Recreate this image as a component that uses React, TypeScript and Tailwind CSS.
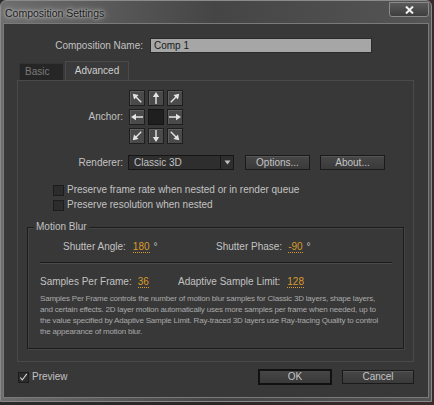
import React from "react";

function Arrow({ deg }: { deg: number }) {
  return (
    <svg width="14" height="14" viewBox="0 0 14 14">
      <g transform={`rotate(${deg} 7 7)`}>
        <path d="M7 1 L10.2 6 L7.7 6 L7.7 13 L6.3 13 L6.3 6 L3.8 6 Z" fill="#e4e4e4" />
      </g>
    </svg>
  );
}

const anchors = [-45, 0, 45, -90, null, 90, -135, 180, 135];

function AnchorButton({ deg }: { deg: number | null }) {
  if (deg === null) {
    return <div className="w-[16px] h-[16px] border border-[#151515] bg-[#1f1f1f]" />;
  }
  return (
    <div className="w-[16px] h-[16px] border border-[#1e1e1e] bg-[#4a4a4a] shadow-[inset_1px_1px_0_#5e5e5e] flex items-center justify-center">
      <Arrow deg={deg} />
    </div>
  );
}

function Check({ on = false }: { on?: boolean }) {
  return (
    <div className="w-[11px] h-[11px] border border-[#1c1c1c] bg-[#2c2c2c] flex items-center justify-center">
      {on && (
        <svg width="11" height="11" viewBox="0 0 11 11">
          <path d="M1.5 5.5 L4 8.5 L9.5 1" stroke="#d8d8d8" strokeWidth="1.3" fill="none" />
        </svg>
      )}
    </div>
  );
}

function Button({ label, w }: { label: string; w: string }) {
  return (
    <div
      className={`${w} h-[15px] border border-[#1a1a1a] bg-gradient-to-b from-[#474747] to-[#3a3a3a] shadow-[inset_0_1px_0_#555] flex items-center justify-center text-[10px] text-[#c4c4c4]`}
    >
      {label}
    </div>
  );
}

function Value({ v }: { v: string }) {
  return (
    <span className="text-[#d99a2c] border-b border-dotted border-[#d99a2c] leading-[11px]">{v}</span>
  );
}

const helpLines = [
  "Samples Per Frame controls the number of motion blur samples for Classic 3D layers, shape layers,",
  "and certain effects. 2D layer motion automatically uses more samples per frame when needed, up to",
  "the value specified by Adaptive Sample Limit. Ray-traced 3D layers use Ray-tracing Quality to control",
  "the appearance of motion blur.",
];

export default function App() {
  return (
    <div className="w-[434px] h-[405px] bg-gradient-to-r from-[#2a2a2a] via-[#2c2526] to-[#3a2a2c] overflow-hidden font-['Liberation_Sans',Arial,sans-serif]">
      <div className="w-[432px] h-[402px] rounded-t-[6px] border border-[#8a8a8a] bg-gradient-to-r from-[#6e6e6e] via-[#454545] to-[#555555] flex flex-col">
        {/* title bar */}
        <div className="h-[22px] flex items-start justify-between pl-[4px] pr-[2px]">
          <span className="mt-[5px] text-[10.5px] text-[#1c1c1c] [text-shadow:0_0_6px_#d8d8d8,0_0_3px_#cfcfcf]">
            Composition Settings
          </span>
          <div className="mt-[1px] w-[40px] h-[15px] rounded-b-[3px] border border-[#8a8a8a] bg-gradient-to-b from-[#5a5a5a] to-[#3e3e3e] flex items-center justify-center">
            <svg width="9" height="8" viewBox="0 0 9 8">
              <path d="M1 0.5 L8 7.5 M8 0.5 L1 7.5" stroke="#f2f2f2" strokeWidth="2" />
            </svg>
          </div>
        </div>
        {/* dialog body */}
        <div className="mx-[2px] mb-[3px] flex-1 border border-[#7a7a7a] bg-[#383838] flex flex-col text-[10px] leading-[12px] text-[#c2c2c2]">
          {/* composition name */}
          <div className="mt-[14px] flex items-center">
            <span className="w-[139px] text-right">Composition Name:</span>
            <div className="ml-[7px] w-[222px] h-[15px] border border-[#2a2a2a] bg-[#a6a6a6] text-[#1a1a1a] pl-[3px] flex items-center">
              Comp 1
            </div>
          </div>
          {/* tabs */}
          <div className="mt-[8px] ml-[15px] flex items-end h-[19px]">
            <div className="w-[44px] h-[17px] bg-[#262626] border-t border-l border-[#333] text-[#7a7a7a] pl-[5px] flex items-center">
              Basic
            </div>
            <div className="ml-[2px] w-[64px] h-[19px] bg-[#3a3a3a] border-t border-l border-r border-[#4a4a4a] text-[#cfcfcf] flex items-center justify-center">
              Advanced
            </div>
          </div>
          {/* tab panel */}
          <div className="ml-[13px] w-[397px] h-[282px] border border-[#4a4a4a] flex flex-col">
            <div className="mt-[9px] flex items-center">
              <span className="w-[105px] text-right">Anchor:</span>
              <div className="ml-[6px] grid grid-cols-[16px_16px_16px] gap-[3px]">
                {anchors.map((d, i) => (
                  <AnchorButton key={i} deg={d} />
                ))}
              </div>
            </div>
            <div className="mt-[11px] flex items-center">
              <span className="w-[105px] text-right">Renderer:</span>
              <div className="ml-[5px] w-[106px] h-[15px] border border-[#161616] bg-[#2e2e2e] flex items-center">
                <span className="flex-1 pl-[5px]">Classic 3D</span>
                <div className="w-[13px] h-full border-l border-[#161616] flex items-center justify-center">
                  <svg width="7" height="5" viewBox="0 0 7 5">
                    <path d="M0.5 0.5 L6.5 0.5 L3.5 4.5 Z" fill="#bdbdbd" />
                  </svg>
                </div>
              </div>
              <div className="ml-[11px]">
                <Button label="Options..." w="w-[65px]" />
              </div>
              <div className="ml-[10px]">
                <Button label="About..." w="w-[65px]" />
              </div>
            </div>
            <div className="mt-[14px] ml-[35px] flex flex-col gap-[3px]">
              <div className="flex items-center gap-[3px] h-[12px]">
                <Check />
                <span>Preserve frame rate when nested or in render queue</span>
              </div>
              <div className="flex items-center gap-[3px] h-[12px]">
                <Check />
                <span>Preserve resolution when nested</span>
              </div>
            </div>
            {/* motion blur group */}
            <div className="mt-[16px] ml-[9px] w-[377px] h-[122px] border border-[#1c1c1c] shadow-[1px_1px_0_#454545,inset_1px_1px_0_#454545] flex flex-col relative">
              <span className="absolute left-[6px] top-[-7px] bg-[#383838] px-[2px] leading-[12px]">Motion Blur</span>
              <div className="mt-[13px] ml-[35px] flex items-center h-[12px]">
                <div className="w-[153px] flex items-center">
                  <span>Shutter Angle:</span>
                  <span className="ml-[7px]"><Value v="180" /></span>
                  <span className="ml-[4px]">°</span>
                </div>
                <span>Shutter Phase:</span>
                <span className="ml-[6px]"><Value v="-90" /></span>
                <span className="ml-[4px]">°</span>
              </div>
              <div className="mt-[9px] ml-[12px] w-[352px] h-[2px] border-t border-[#1c1c1c] border-b border-b-[#4a4a4a]" />
              <div className="mt-[12px] ml-[12px] flex items-center h-[12px]">
                <div className="w-[138px] flex items-center">
                  <span>Samples Per Frame:</span>
                  <span className="ml-[6px]"><Value v="36" /></span>
                </div>
                <span>Adaptive Sample Limit:</span>
                <span className="ml-[7px]"><Value v="128" /></span>
              </div>
              <div className="mt-[5px] ml-[12px] text-[8px] leading-[11px] tracking-[-0.2px] text-[#a9a9a9]">
                {helpLines.map((l) => (
                  <div key={l} className="whitespace-nowrap">{l}</div>
                ))}
              </div>
            </div>
          </div>
          {/* footer */}
          <div className="mt-[7px] flex items-center">
            <div className="ml-[14px] flex items-center gap-[3px]">
              <Check on />
              <span>Preview</span>
            </div>
            <div className="ml-auto w-[74px] h-[16px] border-2 border-[#111] bg-gradient-to-b from-[#464646] to-[#393939] flex items-center justify-center text-[#c4c4c4]">
              OK
            </div>
            <div className="ml-[10px] mr-[14px] w-[72px] h-[14px] border border-[#1a1a1a] bg-gradient-to-b from-[#474747] to-[#3a3a3a] shadow-[inset_0_1px_0_#555] flex items-center justify-center text-[#c4c4c4]">
              Cancel
            </div>
          </div>
        </div>
      </div>
    </div>
  );
}
